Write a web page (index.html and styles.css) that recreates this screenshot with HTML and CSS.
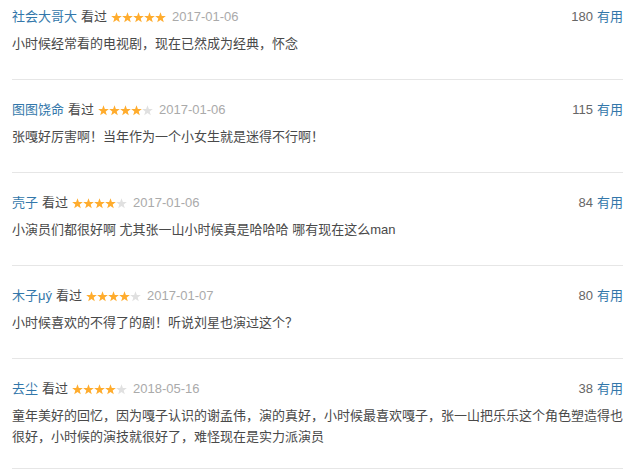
FILE: index.html
```html
<!DOCTYPE html>
<html lang="zh-CN">
<head>
<meta charset="utf-8">
<title>短评</title>
<link rel="stylesheet" href="styles.css">
</head>
<body>
<svg class="defs" width="0" height="0" aria-hidden="true">
  <defs>
    <symbol id="star" viewBox="0 0 11 11">
      <polygon points="5.5,0.2 6.85,3.94 10.83,4.07 7.69,6.51 8.79,10.33 5.5,8.1 2.21,10.33 3.31,6.51 0.17,4.07 4.15,3.94"/>
    </symbol>
  </defs>
</svg>
<div class="comments">
  <div class="item">
    <div class="head">
      <span class="info"><a class="user">社会大哥大</a><span class="seen">看过</span><svg class="stars" width="55" height="11"><use href="#star" x="0" width="11" height="11" class="on"/><use href="#star" x="11" width="11" height="11" class="on"/><use href="#star" x="22" width="11" height="11" class="on"/><use href="#star" x="33" width="11" height="11" class="on"/><use href="#star" x="44" width="11" height="11" class="on"/></svg><span class="date">2017-01-06</span></span>
      <span class="votes"><span class="count">180</span><a class="useful">有用</a></span>
    </div>
    <p class="text">小时候经常看的电视剧，现在已然成为经典，怀念</p>
  </div>
  <div class="item">
    <div class="head">
      <span class="info"><a class="user">图图饶命</a><span class="seen">看过</span><svg class="stars" width="55" height="11"><use href="#star" x="0" width="11" height="11" class="on"/><use href="#star" x="11" width="11" height="11" class="on"/><use href="#star" x="22" width="11" height="11" class="on"/><use href="#star" x="33" width="11" height="11" class="on"/><use href="#star" x="44" width="11" height="11" class="off"/></svg><span class="date">2017-01-06</span></span>
      <span class="votes"><span class="count">115</span><a class="useful">有用</a></span>
    </div>
    <p class="text">张嘎好厉害啊！当年作为一个小女生就是迷得不行啊！</p>
  </div>
  <div class="item">
    <div class="head">
      <span class="info"><a class="user">壳子</a><span class="seen">看过</span><svg class="stars" width="55" height="11"><use href="#star" x="0" width="11" height="11" class="on"/><use href="#star" x="11" width="11" height="11" class="on"/><use href="#star" x="22" width="11" height="11" class="on"/><use href="#star" x="33" width="11" height="11" class="on"/><use href="#star" x="44" width="11" height="11" class="off"/></svg><span class="date">2017-01-06</span></span>
      <span class="votes"><span class="count">84</span><a class="useful">有用</a></span>
    </div>
    <p class="text">小演员们都很好啊 尤其张一山小时候真是哈哈哈 哪有现在这么man</p>
  </div>
  <div class="item">
    <div class="head">
      <span class="info"><a class="user">木子μý</a><span class="seen">看过</span><svg class="stars" width="55" height="11"><use href="#star" x="0" width="11" height="11" class="on"/><use href="#star" x="11" width="11" height="11" class="on"/><use href="#star" x="22" width="11" height="11" class="on"/><use href="#star" x="33" width="11" height="11" class="on"/><use href="#star" x="44" width="11" height="11" class="off"/></svg><span class="date">2017-01-07</span></span>
      <span class="votes"><span class="count">80</span><a class="useful">有用</a></span>
    </div>
    <p class="text">小时候喜欢的不得了的剧！听说刘星也演过这个？</p>
  </div>
  <div class="item">
    <div class="head">
      <span class="info"><a class="user">去尘</a><span class="seen">看过</span><svg class="stars" width="55" height="11"><use href="#star" x="0" width="11" height="11" class="on"/><use href="#star" x="11" width="11" height="11" class="on"/><use href="#star" x="22" width="11" height="11" class="on"/><use href="#star" x="33" width="11" height="11" class="on"/><use href="#star" x="44" width="11" height="11" class="off"/></svg><span class="date">2018-05-16</span></span>
      <span class="votes"><span class="count">38</span><a class="useful">有用</a></span>
    </div>
    <p class="text">童年美好的回忆，因为嘎子认识的谢孟伟，演的真好，小时候最喜欢嘎子，张一山把乐乐这个角色塑造得也很好，小时候的演技就很好了，难怪现在是实力派演员</p>
  </div>
</div>
</body>
</html>
```

FILE: styles.css
```css
html, body {
  margin: 0;
  padding: 0;
  background: #fff;
}

body {
  font-family: "Liberation Sans", Arial, "Noto Sans CJK SC", sans-serif;
  font-size: 13px;
  color: #494949;
}

.defs {
  position: absolute;
  width: 0;
  height: 0;
  overflow: hidden;
}

.comments {
  width: 611px;
  padding-left: 12px;
}

.item {
  padding: 20px 0 25px;
  border-bottom: 1px solid #e6e6e6;
}

.item:first-child {
  padding-top: 7px;
}

.item:last-child {
  padding-bottom: 21px;
}

.head {
  display: flex;
  justify-content: space-between;
  align-items: center;
  height: 20px;
  line-height: 20px;
}

.info {
  display: flex;
  align-items: center;
  gap: 4px;
}

.user {
  color: #3377aa;
}

.seen {
  color: #494949;
}

.stars {
  display: block;
  width: 55px;
  height: 11px;
  margin-right: 2px;
}

.stars .on {
  fill: #ffac2d;
}

.stars .off {
  fill: #e0e0e0;
}

.date {
  color: #aaaaaa;
}

.votes {
  display: flex;
  gap: 4px;
}

.count {
  color: #666666;
}

.useful {
  color: #3377aa;
}

.text {
  margin: 6px 0 0;
  line-height: 21px;
  color: #494949;
  word-break: break-all;
}
```
